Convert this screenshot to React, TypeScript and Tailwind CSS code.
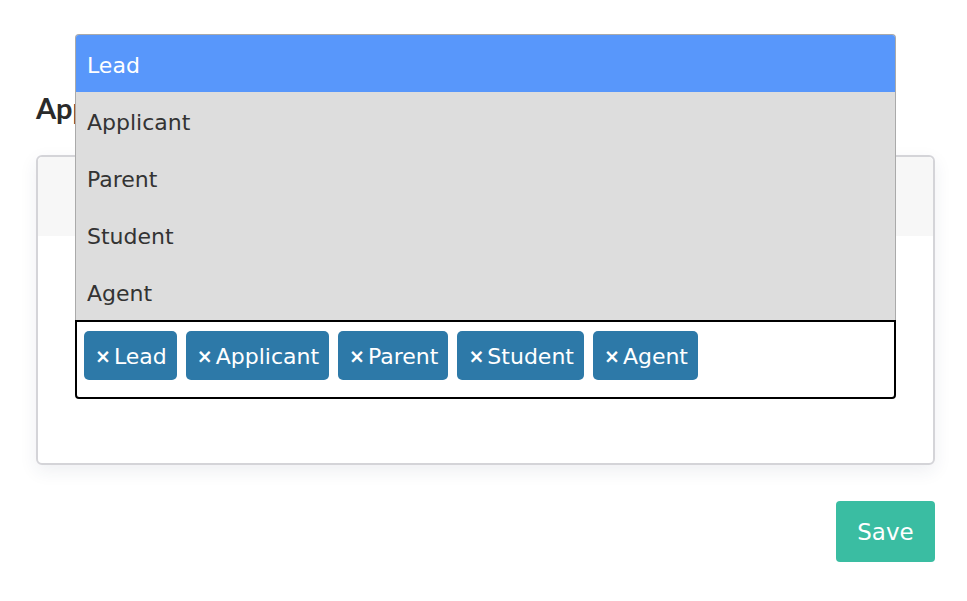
const options = ['Lead', 'Applicant', 'Parent', 'Student', 'Agent']

export default function App() {
  return (
    <div
      className="min-h-[601px] w-full bg-white pl-[36px] pr-[32px] pt-[89px] text-[#333]"
      style={{ fontFamily: '"DejaVu Sans", Lato, sans-serif' }}
    >
      <h2
        className="text-[29px] font-bold leading-[38px] text-[#2a2a2a]"
        style={{ fontFamily: 'Lato, sans-serif' }}
      >
        Application Types
      </h2>

      {/* Card */}
      <div className="mt-[28px] rounded-[6px] border-2 border-[#d4d4d8] bg-white shadow-[0_6px_18px_rgba(40,50,90,0.08)]">
        <div className="h-[79px] rounded-t-[5px] bg-[#f7f7f7]" />
        <div className="px-[37px] pb-[64px] pt-[84px]">
          <div className="relative">
            {/* Open dropdown list */}
            <div className="absolute bottom-full left-0 right-0 overflow-hidden rounded-t-[4px] border border-b-0 border-[#aaaaaa] bg-[#dddddd]">
              {options.map((o, i) => (
                <div
                  key={o}
                  className={
                    i === 0
                      ? 'flex h-[57px] items-center bg-[#5897fb] pl-[11px] pt-[3px] text-[22px] text-white'
                      : 'flex h-[57px] items-center pl-[11px] pt-[3px] text-[22px] text-[#333]'
                  }
                >
                  {o}
                </div>
              ))}
            </div>

            {/* Select box */}
            <div className="flex h-[79px] flex-wrap items-start gap-[9px] rounded-b-[4px] border-2 border-black bg-white pl-[7px] pt-[9px]">
              {options.map((o) => (
                <span
                  key={o}
                  className="flex h-[49px] items-center rounded-[5px] bg-[#2d79a8] pl-[11px] pr-[10px] pt-[2px] text-[22px] text-white"
                >
                  <span className="mr-[3px] text-[19px] font-bold">×</span>
                  {o}
                </span>
              ))}
            </div>
          </div>
        </div>
      </div>

      <div className="mt-[36px] flex justify-end">
        <button className="h-[61px] w-[99px] rounded-[4px] bg-[#3abda2] pt-[2px] text-[23px] text-white">Save</button>
      </div>
    </div>
  )
}
